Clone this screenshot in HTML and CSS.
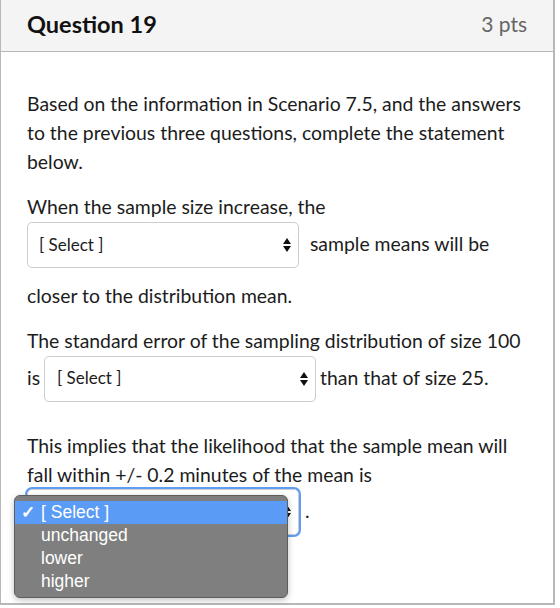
FILE: index.html
```html
<!DOCTYPE html>
<html>
<head>
<meta charset="utf-8">
<link rel="stylesheet" href="styles.css">
</head>
<body>
<div class="card">
  <div class="header">
    <h2 class="title">Question 19</h2>
    <span class="pts">3 pts</span>
  </div>
  <div class="content">
    <p class="intro">Based on the information in Scenario 7.5, and the answers to the previous three questions, complete the statement below.</p>
    <p>When the sample size increase, the <span class="select s1"><span class="sel-text">[ Select ]</span><svg class="arrows" width="8" height="14" viewBox="0 0 8 14"><path d="M0 6 L4 0 L8 6 Z M0 8 L8 8 L4 14 Z" fill="#111"/></svg></span> sample means will be closer to the distribution mean.</p>
    <p>The standard error of the sampling distribution of size 100 is<span class="select s2"><span class="sel-text">[ Select ]</span><svg class="arrows" width="8" height="14" viewBox="0 0 8 14"><path d="M0 6 L4 0 L8 6 Z M0 8 L8 8 L4 14 Z" fill="#111"/></svg></span>than that of size 25.</p>
    <p>This implies that the likelihood that the sample mean will fall within +/- 0.2 minutes of the mean is <span class="select s3 focus"><span class="sel-text">[ Select ]</span><svg class="arrows" width="8" height="14" viewBox="0 0 8 14"><path d="M0 6 L4 0 L8 6 Z M0 8 L8 8 L4 14 Z" fill="#111"/></svg><span class="popup"><span class="opt active"><span class="check">✓</span>[ Select ]</span><span class="opt">unchanged</span><span class="opt">lower</span><span class="opt">higher</span></span></span>.</p>
  </div>
</div>
</body>
</html>
```

FILE: styles.css
```css
* { box-sizing: border-box; }
html, body { margin: 0; padding: 0; background: #ffffff; }
body {
  font-family: Lato, "Open Sans", sans-serif;
  color: #1c1c1c;
}
.card {
  width: 555px;
  height: 605px;
  border: 1px solid #b8b8b8;
  border-top: none;
  border-right: 2px solid #b8b8b8;
  border-bottom: 2px solid #b8b8b8;
  background: #fff;
}
.header {
  height: 52px;
  background: #f4f4f4;
  border-bottom: 1px solid #b8b8b8;
  display: flex;
  align-items: center;
  justify-content: space-between;
  padding: 0 26px 4px 26px;
}
.title {
  margin: 0;
  font-size: 23.5px;
  font-weight: 700;
  color: #111;
}
.pts {
  font-size: 21px;
  color: #666;
}
.content {
  padding: 38px 22px 0 26px;
}
.content p {
  margin: 0 0 16px 0;
  font-size: 19.4px;
  line-height: 28.8px;
}
.content p.intro {
  margin-bottom: 17px;
}
.select {
  display: inline-flex;
  align-items: center;
  justify-content: space-between;
  width: 272px;
  height: 46px;
  border: 1px solid #c9ced2;
  border-radius: 5px;
  padding: 0 7px 0 11px;
  background: #fff;
  vertical-align: baseline;
  margin-bottom: 14px;
  position: relative;
}
.sel-text {
  font-size: 17px;
  color: #1c1c1c;
}
.s1 { margin-right: 6px; }
.s2 { margin: 0 4px 14px 4px; padding-left: 12px; }
.focus {
  box-shadow: 0 0 0 2px #5f9df3;
  margin-right: 6px;
  margin-left: 0;
}
.popup {
  position: absolute;
  left: -14px;
  top: 5px;
  width: 274px;
  padding: 5px 0 4px 0;
  background: #7f7f7f;
  border: 1px solid #5e5e5e;
  border-radius: 6px;
  display: flex;
  flex-direction: column;
  box-shadow: 0 2px 6px rgba(0,0,0,0.25);
}
.opt {
  display: block;
  height: 23px;
  line-height: 23px;
  padding-left: 26px;
  font-family: "Liberation Sans", Arial, sans-serif;
  font-size: 17.5px;
  color: #fff;
  position: relative;
}
.opt.active {
  background: #5a9bf5;
}
.check {
  position: absolute;
  left: 6px;
  top: 0;
  font-size: 17px;
  font-weight: 700;
}
```
